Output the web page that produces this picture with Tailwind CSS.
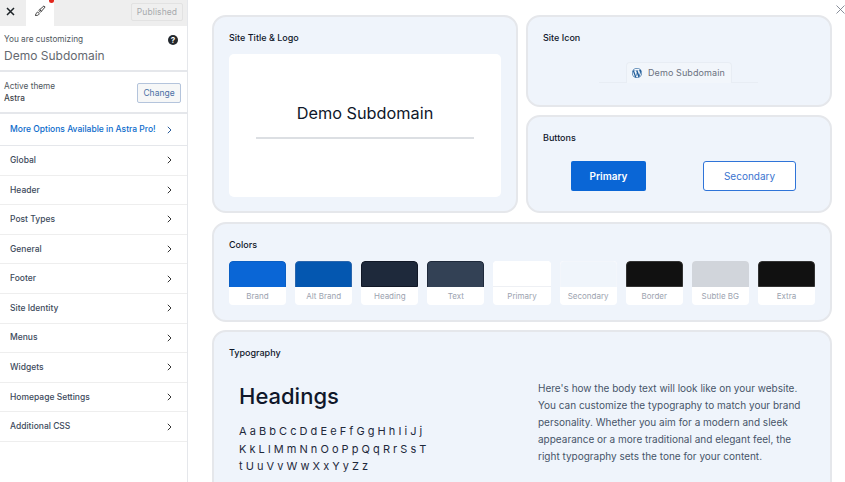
<!DOCTYPE html>
<html lang="en">
<head>
    <meta charset="UTF-8">
    <title>Customizer</title>
    <script src="https://cdn.jsdelivr.net/npm/@tailwindcss/browser@4"></script>
</head>
<body class="relative h-[482px] w-[845px] overflow-hidden bg-white font-['Inter',sans-serif] flex">
    <!-- Sidebar -->
    <aside class="w-[188px] h-full shrink-0 border-r border-[#e5e7eb] bg-white flex flex-col">
        <div class="h-[26px] shrink-0 bg-[#eeeeee] flex items-stretch">
            <div class="w-[26px] flex items-center justify-center pr-[6px] pb-[4px]">
                <svg width="9" height="9" viewBox="0 0 9 9" fill="none" stroke="#1d2327" stroke-width="1.5"><path d="M1 1l7 7M8 1l-7 7"/></svg>
            </div>
            <div class="relative w-[28px] bg-white flex items-center justify-center pb-[4px]">
                <svg width="12" height="12" viewBox="0 0 12 12" fill="none" stroke="#333" stroke-width="0.9"><path d="M10 .9l1.1 1.1-3.6 4.2-1.7-1.7z"/><path d="M5.7 4.6l1.7 1.7-.9.9-1.7-1.7z"/><path d="M3.8 7.2c-1 0-1.5.7-1.6 1.6-.1.7-.5 1-1.2 1.4 1.3.6 3.4.3 4-1 .3-.9-.2-2-1.2-2z"/></svg>
                <span class="absolute top-[-2px] left-[23px] w-[5px] h-[5px] rounded-full bg-[#e2261c]"></span>
            </div>
            <div class="flex-1 flex items-center justify-end pr-[4px] pb-[2px]">
                <button class="w-[52px] h-[18px] rounded-[2px] border border-[#e2e2e2] bg-[#efefef] text-[8.5px] leading-none text-[#a7aaad] tracking-[0.1px]">Published</button>
            </div>
        </div>
        <div class="h-[46px] shrink-0 border-b-2 border-[#e5e7eb] pl-[4px] pr-[14px] pt-[7px] relative">
            <p class="text-[8.25px] leading-[12px] text-[#50575e]">You are customizing</p>
            <p class="text-[12px] leading-[18px] mt-[2px] text-[#646970]">Demo Subdomain</p>
            <svg class="absolute right-[9px] top-[9px]" width="10" height="10" viewBox="0 0 10 10"><circle cx="5" cy="5" r="5" fill="#23282d"/><text x="5" y="8" text-anchor="middle" font-size="8" font-weight="700" fill="#fff" font-family="Inter">?</text></svg>
        </div>
        <div class="h-[42px] shrink-0 border-b-2 border-[#e5e7eb] pl-[4px] pr-[6px] flex items-center justify-between">
            <div>
                <p class="text-[8.25px] leading-[12px] text-[#50575e]">Active theme</p>
                <p class="text-[8.25px] leading-[12px] font-medium text-[#3c434a]">Astra</p>
            </div>
            <button class="w-[44px] h-[20px] mt-[2px] rounded-[2px] border border-[#b4c4dc] bg-[#f6f7f7] text-[8.5px] leading-none text-[#4a6fa5]">Change</button>
        </div>
        <div class="h-[32px] shrink-0 border-b border-[#e5e7eb] pl-[10px] pr-[15px] flex items-center justify-between text-[8.5px] font-medium text-[#0b6bcb]">
            <span>More Options Available in Astra Pro!</span>
            <svg width="5" height="8" viewBox="0 0 5 8" fill="none" stroke="#2a5c9a" stroke-width="1"><path d="M.8.8L4 4 .8 7.2"/></svg>
        </div>
        <ul class="flex flex-col text-[8.5px] font-medium text-[#3d4a5c]">
            <li class="h-[29.6px] border-b border-[#eeeeee] pl-[10px] pr-[15px] flex items-center justify-between"><span>Global</span><svg width="5" height="8" viewBox="0 0 5 8" fill="none" stroke="#333" stroke-width="1"><path d="M.8.8L4 4 .8 7.2"/></svg></li>
            <li class="h-[29.6px] border-b border-[#eeeeee] pl-[10px] pr-[15px] flex items-center justify-between"><span>Header</span><svg width="5" height="8" viewBox="0 0 5 8" fill="none" stroke="#333" stroke-width="1"><path d="M.8.8L4 4 .8 7.2"/></svg></li>
            <li class="h-[29.6px] border-b border-[#eeeeee] pl-[10px] pr-[15px] flex items-center justify-between"><span>Post Types</span><svg width="5" height="8" viewBox="0 0 5 8" fill="none" stroke="#333" stroke-width="1"><path d="M.8.8L4 4 .8 7.2"/></svg></li>
            <li class="h-[29.6px] border-b border-[#eeeeee] pl-[10px] pr-[15px] flex items-center justify-between"><span>General</span><svg width="5" height="8" viewBox="0 0 5 8" fill="none" stroke="#333" stroke-width="1"><path d="M.8.8L4 4 .8 7.2"/></svg></li>
            <li class="h-[29.6px] border-b border-[#eeeeee] pl-[10px] pr-[15px] flex items-center justify-between"><span>Footer</span><svg width="5" height="8" viewBox="0 0 5 8" fill="none" stroke="#333" stroke-width="1"><path d="M.8.8L4 4 .8 7.2"/></svg></li>
            <li class="h-[29.6px] border-b border-[#eeeeee] pl-[10px] pr-[15px] flex items-center justify-between"><span>Site Identity</span><svg width="5" height="8" viewBox="0 0 5 8" fill="none" stroke="#333" stroke-width="1"><path d="M.8.8L4 4 .8 7.2"/></svg></li>
            <li class="h-[29.6px] border-b border-[#eeeeee] pl-[10px] pr-[15px] flex items-center justify-between"><span>Menus</span><svg width="5" height="8" viewBox="0 0 5 8" fill="none" stroke="#333" stroke-width="1"><path d="M.8.8L4 4 .8 7.2"/></svg></li>
            <li class="h-[29.6px] border-b border-[#eeeeee] pl-[10px] pr-[15px] flex items-center justify-between"><span>Widgets</span><svg width="5" height="8" viewBox="0 0 5 8" fill="none" stroke="#333" stroke-width="1"><path d="M.8.8L4 4 .8 7.2"/></svg></li>
            <li class="h-[29.6px] border-b border-[#eeeeee] pl-[10px] pr-[15px] flex items-center justify-between"><span>Homepage Settings</span><svg width="5" height="8" viewBox="0 0 5 8" fill="none" stroke="#333" stroke-width="1"><path d="M.8.8L4 4 .8 7.2"/></svg></li>
            <li class="h-[29.6px] border-b border-[#eeeeee] pl-[10px] pr-[15px] flex items-center justify-between"><span>Additional CSS</span><svg width="5" height="8" viewBox="0 0 5 8" fill="none" stroke="#333" stroke-width="1"><path d="M.8.8L4 4 .8 7.2"/></svg></li>
        </ul>
    </aside>

    <!-- Close -->
    <svg class="absolute right-0 top-[5px]" width="9" height="9" viewBox="0 0 9 9" fill="none" stroke="#6b7280" stroke-width="0.8"><path d="M.5.5l8 8M8.5.5l-8 8"/></svg>

    <!-- Preview -->
    <main class="flex-1 pt-[15px] pl-[24px] pr-[13px] flex flex-col gap-[8px] text-[#0f172a]">
        <div class="grid grid-cols-[306px_306px] gap-x-[8px] h-[198px] mb-[1px] shrink-0">
            <section class="rounded-[14px] border-2 border-[#e5e7eb] bg-[#eff4fb] px-[15px] pt-[13px]">
                <h3 class="text-[9px] leading-[15px] font-medium">Site Title &amp; Logo</h3>
                <div class="mt-[9px] h-[143px] rounded-[5px] bg-white flex flex-col items-center pt-[48px]">
                    <p class="text-[16.3px] leading-[22px] text-[#0f172a]">Demo Subdomain</p>
                    <div class="mt-[13px] w-[218px] h-[1.5px] bg-[#dcdfe3]"></div>
                </div>
            </section>
            <div class="flex flex-col gap-[8px]">
                <section class="h-[92px] rounded-[14px] border-2 border-[#e5e7eb] bg-[#eff4fb] px-[15px] pt-[13px]">
                    <h3 class="text-[9px] leading-[15px] font-medium">Site Icon</h3>
                    <div class="relative mt-[17px] flex justify-center">
                        <div class="absolute left-[56px] right-[57px] top-[20px] h-px bg-[#e8edf4]"></div>
                        <div class="relative h-[21px] w-[106px] rounded-t-[4px] border border-b-0 border-[#e8edf4] bg-[#f2f6fb] flex items-center pl-[5px] gap-[6px]">
                            <svg width="10" height="10" viewBox="0 0 20 20" fill="#1f5c99"><path d="M20 10c0-5.51-4.49-10-10-10C4.48 0 0 4.49 0 10c0 5.52 4.48 10 10 10 5.51 0 10-4.48 10-10zM7.78 15.37L4.37 6.22c.55-.02 1.17-.08 1.17-.08.5-.06.44-1.13-.06-1.11 0 0-1.45.11-2.37.11-.18 0-.37 0-.58-.01C4.12 2.69 6.87 1.11 10 1.11c2.33 0 4.45.87 6.05 2.34-.68-.11-1.65.39-1.65 1.58 0 .74.45 1.36.9 2.1.35.61.55 1.36.55 2.46 0 1.49-1.4 5-1.4 5l-3.03-8.37c.54-.02.82-.17.82-.17.5-.05.44-1.25-.06-1.22 0 0-1.44.12-2.38.12-.87 0-2.33-.12-2.33-.12-.5-.03-.56 1.2-.06 1.22l.92.08 1.26 3.41zM17.41 10c.24-.64.74-1.87.43-4.25.7 1.29 1.05 2.71 1.05 4.25 0 3.29-1.73 6.24-4.4 7.78.97-2.59 1.94-5.2 2.92-7.78zM6.1 18.09C3.12 16.65 1.11 13.53 1.11 10c0-1.3.23-2.48.72-3.59C3.25 10.3 4.67 14.2 6.1 18.09zm4.03-6.63l2.58 6.98c-.86.29-1.76.45-2.71.45-.79 0-1.57-.11-2.29-.33.81-2.38 1.62-4.74 2.42-7.1z"/></svg>
                            <span class="text-[9px] text-[#6b7280] tracking-[0.1px]">Demo Subdomain</span>
                        </div>
                    </div>
                </section>
                <section class="h-[98px] rounded-[14px] border-2 border-[#e5e7eb] bg-[#eff4fb] px-[15px] pt-[13px]">
                    <h3 class="text-[9px] leading-[15px] font-medium">Buttons</h3>
                    <div class="mt-[16px] flex pl-[28px] gap-[57px]">
                        <button class="w-[75px] h-[30px] rounded-[2px] bg-[#0a66d6] text-[10px] font-semibold text-white">Primary</button>
                        <button class="w-[93px] h-[30px] rounded-[3px] border-[1.5px] border-[#2f74d8] bg-white text-[10px] text-[#3a74d0]">Secondary</button>
                    </div>
                </section>
            </div>
        </div>

        <section class="h-[100px] shrink-0 rounded-[14px] border-2 border-[#e5e7eb] bg-[#eff4fb] px-[15px] pt-[13px]">
            <h3 class="text-[9px] leading-[15px] font-medium">Colors</h3>
            <div class="mt-[9px] grid grid-cols-9 gap-x-[9px] w-[586px]">
                <div class="h-[44px] rounded-[4px] bg-white overflow-hidden"><div class="h-[26px] bg-[#0a66d6] border border-b-0 border-[#0a5fc4] rounded-t-[4px]"></div><p class="text-center text-[8px] leading-[19px] text-[#9ca3af]">Brand</p></div>
                <div class="h-[44px] rounded-[4px] bg-white overflow-hidden"><div class="h-[26px] bg-[#0457b0] border border-b-0 border-[#2a66ad] rounded-t-[4px]"></div><p class="text-center text-[8px] leading-[19px] text-[#9ca3af]">Alt Brand</p></div>
                <div class="h-[44px] rounded-[4px] bg-white overflow-hidden"><div class="h-[26px] bg-[#1e293b] border border-[#111827] rounded-t-[4px]"></div><p class="text-center text-[8px] leading-[19px] text-[#9ca3af]">Heading</p></div>
                <div class="h-[44px] rounded-[4px] bg-white overflow-hidden"><div class="h-[26px] bg-[#334155] border border-b-0 border-[#1e293b] rounded-t-[4px]"></div><p class="text-center text-[8px] leading-[19px] text-[#9ca3af]">Text</p></div>
                <div class="h-[44px] rounded-[4px] bg-white overflow-hidden"><div class="h-[26px] bg-white border-b border-[#eef0f4]"></div><p class="text-center text-[8px] leading-[19px] text-[#9ca3af]">Primary</p></div>
                <div class="h-[44px] rounded-[4px] bg-white overflow-hidden"><div class="h-[26px] bg-[#f0f5fb] border border-b-0 border-[#f3f6fb] rounded-t-[4px]"></div><p class="text-center text-[8px] leading-[19px] text-[#9ca3af]">Secondary</p></div>
                <div class="h-[44px] rounded-[4px] bg-white overflow-hidden"><div class="h-[26px] bg-[#111111] border border-[#333333] rounded-t-[4px]"></div><p class="text-center text-[8px] leading-[19px] text-[#9ca3af]">Border</p></div>
                <div class="h-[44px] rounded-[4px] bg-white overflow-hidden"><div class="h-[26px] bg-[#d1d5db]"></div><p class="text-center text-[8px] leading-[19px] text-[#9ca3af]">Subtle BG</p></div>
                <div class="h-[44px] rounded-[4px] bg-white overflow-hidden"><div class="h-[26px] bg-[#111111] border border-[#333333] rounded-t-[4px]"></div><p class="text-center text-[8px] leading-[19px] text-[#9ca3af]">Extra</p></div>
            </div>
        </section>

        <section class="h-[200px] shrink-0 rounded-[14px] border-2 border-[#e5e7eb] bg-[#eff4fb] px-[15px] pt-[13px]">
            <h3 class="text-[9px] leading-[15px] font-medium">Typography</h3>
            <div class="mt-[20px] flex pl-[10px]">
                <div class="w-[299px]">
                    <h2 class="text-[22px] leading-[32px] font-medium text-[#0f172a]">Headings</h2>
                    <p class="mt-[11px] w-[192px] text-[11px] leading-[17.5px] text-[#1e293b]">A a B b C c D d E e F f G g H h I i J j K k L l M m N n O o P p Q q R r S s T t U u V v W w X x Y y Z z</p>
                </div>
                <p class="w-[268px] text-[10px] leading-[17px] text-[#475569]">Here's how the body text will look like on your website. You can customize the typography to match your brand personality. Whether you aim for a modern and sleek appearance or a more traditional and elegant feel, the right typography sets the tone for your content.</p>
            </div>
        </section>
    </main>
</body>
</html>
